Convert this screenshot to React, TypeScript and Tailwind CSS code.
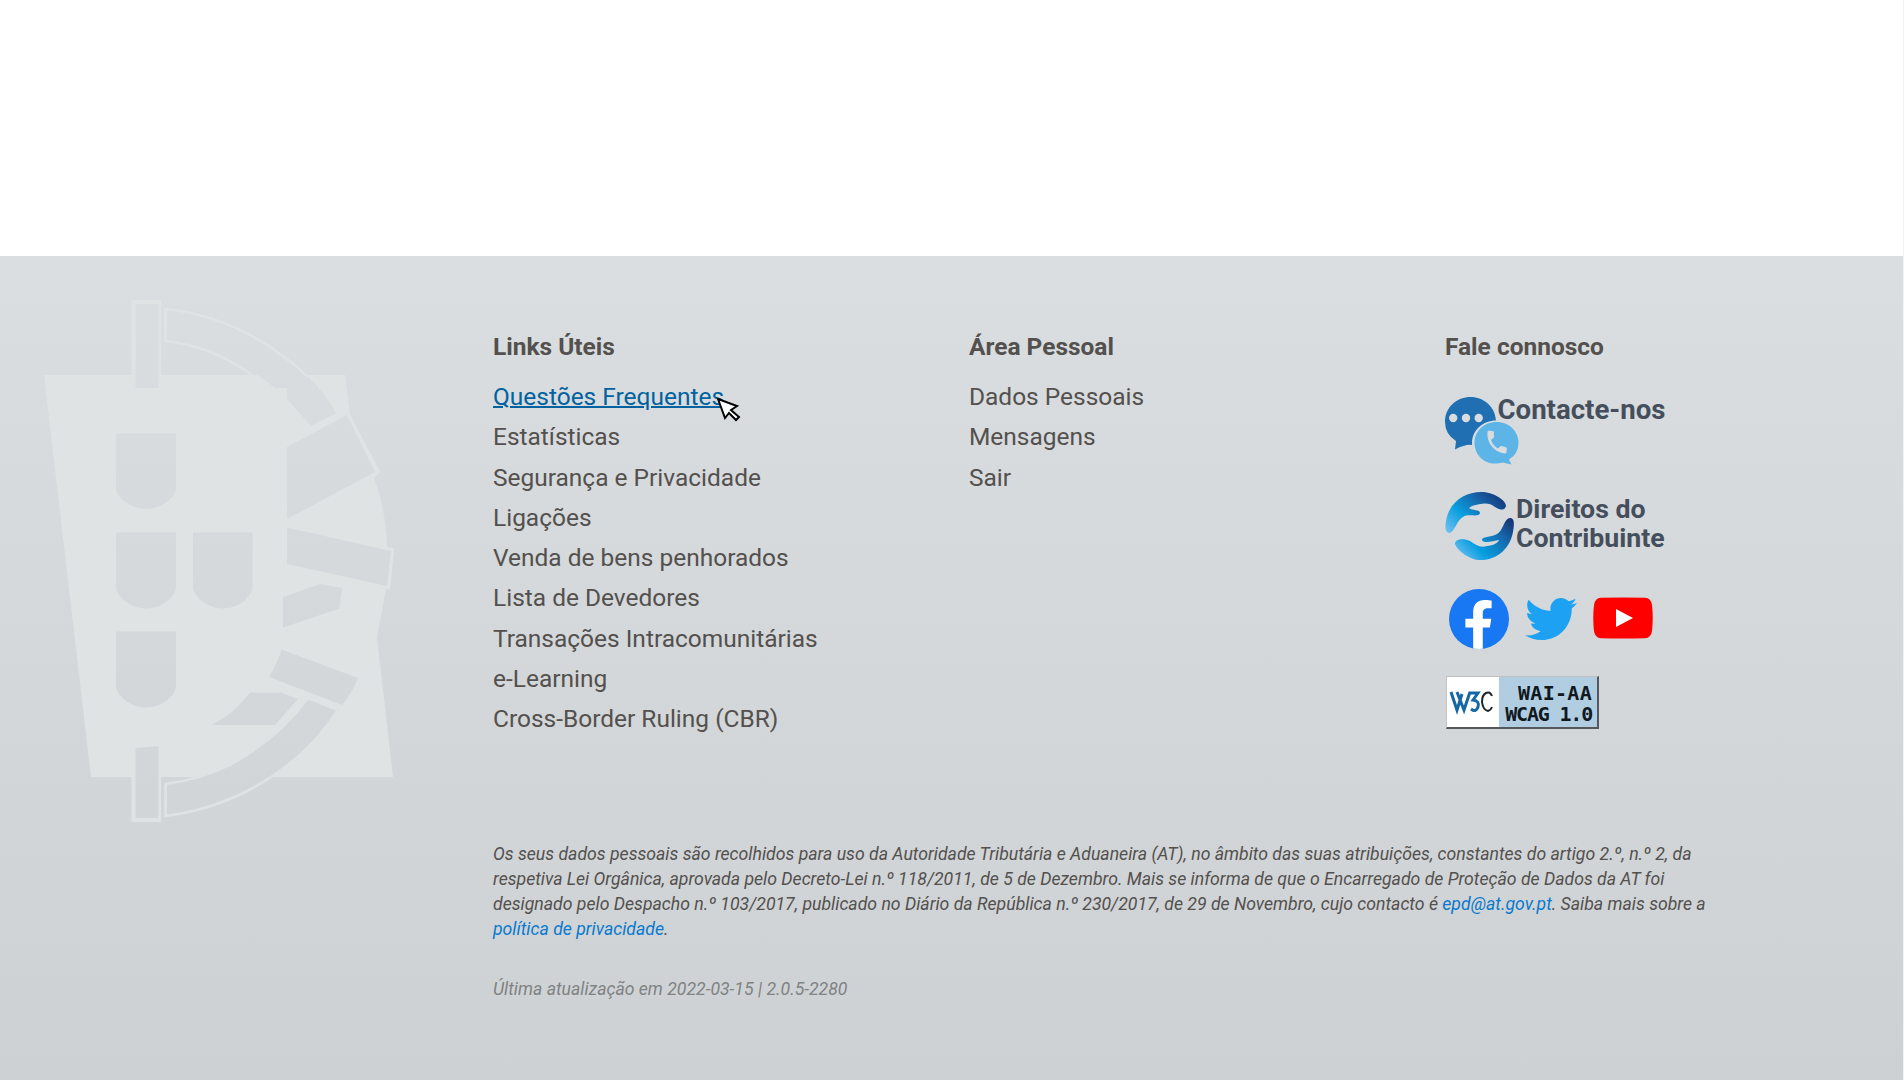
import { FaFacebookF, FaTwitter } from "react-icons/fa";
import { MdPhone } from "react-icons/md";

const usefulLinks = [
  "Questões Frequentes",
  "Estatísticas",
  "Segurança e Privacidade",
  "Ligações",
  "Venda de bens penhorados",
  "Lista de Devedores",
  "Transações Intracomunitárias",
  "e-Learning",
  "Cross-Border Ruling (CBR)",
];
const personalLinks = ["Dados Pessoais", "Mensagens", "Sair"];

function Emblem() {
  return (
    <svg viewBox="30 280 380 560" className="block h-[560px] w-[380px]">
      <defs>
        <linearGradient id="cut" gradientUnits="userSpaceOnUse" x1="0" y1="256" x2="0" y2="1080">
          <stop offset="0" stopColor="#dadee0" />
          <stop offset="1" stopColor="#cdd1d3" />
        </linearGradient>
      </defs>
      <g fill="#dfe3e4">
        <path d="M44 375H131.500V300H161V375H345L350 414L379 473L374 478Q386 510 387 547L394 549L389 590L386 589L377 637L393 777H91Z" />
        <path d="M131.500 777V822H161V777Z" />
      </g>
      <g fill="url(#cut)">
        <path d="M135.500 304H158.500V388H135.500Z" />
        <path d="M135.500 748L158.500 746V818H135.500Z" />
        <path d="M116 433.500H176V488C176 497 162 509 146 509S116 497 116 488Z" />
        <path d="M116 532.500H176V587C176 596 162 608.500 146 608.500S116 596 116 587Z" />
        <path d="M193 532.500H252.500V587C252.500 596 239 608.500 223 608.500S193 596 193 587Z" />
        <path d="M116 631.500H176V686C176 695 162 707.500 146 707.500S116 695 116 686Z" />
        <path d="M287 447L347 415L375 472L287 519Z" />
        <path d="M287 527.500L391 551L387 586L287 564Z" />
        <path d="M283 597L320 584L342 588L339.500 608.500L283 627.500Z" />
        <path d="M281.500 649.500L358 678Q352 693 342 705L269 677Q277 664 281.500 649.500Z" />
        <path d="M250 692.500H281L298 699L275 725H211Q233 715 250 692.500Z" />
        <path d="M161 777.500H190L161 784Z" />
      </g>
      <path d="M165.500 309Q244 317 308 377Q324 391 336 413.500L311 426L287 399V388H275Q224 346 165.500 341Z" fill="url(#cut)" />
      <path d="M252 375Q212 346 165.500 341V309Q244 317 308 377" fill="none" stroke="#dfe3e4" strokeWidth="2.500" />
      <path d="M308 698L338 710Q320 737 302 753Q243 806 165.500 816V784Q202 779 230 765Q280 737 308 698Z" fill="url(#cut)" stroke="#dfe3e4" strokeWidth="2.500" />
      <path d="M348 413L379 472L374 475M387 548L393 549L389 588L385 587" fill="none" stroke="#dfe3e4" strokeWidth="2.500" />
    </svg>
  );
}

function ContactIcon() {
  return (
    <svg viewBox="0 0 75 70" className="block h-[70px] w-[75px]">
      <path d="M25.500 0C39 0 50.500 10 51 24Q49 42 26.500 48Q21 47 10 52.500L11 44Q0 37 0 25C0 10 12 0 25.500 0Z" fill="#1f6fb2" />
      <circle cx="8.200" cy="21" r="4.200" fill="#d8dcde" />
      <circle cx="21" cy="21" r="4.200" fill="#d8dcde" />
      <circle cx="33.700" cy="21" r="4.200" fill="#d8dcde" />
      <path d="M51 23.500C38 23.500 27 33 27 46C27 60 38 69 51 69Q57 69 60 66L69 71L66 62Q75 56 75 46C75 33 65 23.500 51 23.500Z" fill="#d8dcde" />
      <path d="M51.500 25C64 25 73.500 34 73.500 45.500Q73.500 57 64 62.500L66.500 67.500Q61 66.500 58 65.500C42 70 30 60 29.500 46.500C29.500 34 39 25 51.500 25Z" fill="#5cb4e7" />
      <g transform="rotate(6 51 45)"><MdPhone x="38" y="31" size={28} color="#d8dcde" /></g>
    </svg>
  );
}

function HandsIcon() {
  return (
    <svg viewBox="0 0 70 70" className="block size-[70px] shrink-0">
      <defs>
        <linearGradient id="handTop" x1="0" y1=".9" x2="1" y2=".2">
          <stop stopColor="#69bef0" />
          <stop offset=".35" stopColor="#099fdf" />
          <stop offset=".7" stopColor="#1863aa" />
          <stop offset="1" stopColor="#143878" />
        </linearGradient>
        <linearGradient id="handBottom" x1="0" y1=".8" x2="1" y2=".1">
          <stop stopColor="#69bef0" />
          <stop offset=".3" stopColor="#079ee0" />
          <stop offset=".65" stopColor="#1471b5" />
          <stop offset="1" stopColor="#183474" />
        </linearGradient>
      </defs>
      <path d="M5 41C0 41 0 35 1 29C4 10 20 0 36 0C48 0 61 8 61 14C60 19 54 18 50 15C44 10 37 11 27 14L24 16C27 19 35 17 35 21C34 26 23 21 18 25C12 28 10 39 5 41Z" fill="url(#handTop)" />
      <path d="M66 26C70 27 69 34 68 40C64 61 47 69 33 68C23 67 11 57 10 52C10 47 18 46 25 49C31 53 35 56 42 54C48 54 54 50 54 48C49 49 38 52 37 48C37 44 45 46 52 42C59 38 59 25 66 26Z" fill="url(#handBottom)" />
    </svg>
  );
}

function W3Badge() {
  return (
    <div className="flex h-[53px] w-[153px] border-t border-r-2 border-b-2 border-l border-t-[#bfc0c0] border-r-[#555860] border-b-[#55585a] border-l-[#c4c4c4] bg-[#b1cde2]">
      <svg viewBox="0 2 52 50" className="h-[50px] w-[52px] shrink-0 bg-white">
        <g fill="none" strokeWidth="3">
          <g stroke="#1567a5">
            <path d="M4 17L10 35L15 19M10 17L17 35L23 17" />
            <path d="M22 18H31L26 25Q33 26 31 32Q29 38 24 34" />
          </g>
          <path d="M45 21Q43 16 39 18Q35 20 35 27Q36 35 41 36Q44 35 45 32" stroke="#20262a" strokeWidth="2" />
        </g>
      </svg>
      <div className="grow pt-[6px] pr-[5px] text-right font-['DejaVu_Sans_Mono',monospace] text-[20px] leading-[21px] font-bold text-[#101820]">
        <div className="tracking-[0.3px]">WAI-AA</div>
        <div className="tracking-[-1.2px]">WCAG 1.0</div>
      </div>
    </div>
  );
}

function LinkColumn({ title, links }: { title: string; links: string[] }) {
  return (
    <section className="w-[476px] shrink-0">
      <h2 className="mb-5 text-[24.48px] leading-[30px] font-bold">{title}</h2>
      <ul>
        {links.map((link) => (
          <li key={link} className="h-[40.25px] text-[24.48px] leading-[30px]">
            {link === "Questões Frequentes" ? (
              <a href="#" className="relative text-[#00629f] underline decoration-2">
                {link}
                <svg viewBox="0 0 26 26" className="absolute right-[-18px] bottom-[-12px] size-[26px]">
                  <path d="M2 2L21 9L15 13L23 20L20 23L13 16L9 21Z" fill="#fff" stroke="#000" strokeWidth="2" />
                </svg>
              </a>
            ) : (
              <a href="#">{link}</a>
            )}
          </li>
        ))}
      </ul>
    </section>
  );
}

export default function App() {
  return (
    <div className="flex h-[1080px] w-[1904px] flex-col overflow-hidden border-r border-[#f1f2f2] bg-white font-['Roboto',sans-serif] text-[#53504e]">
      <main className="h-[256px] shrink-0" />
      <footer className="flex grow bg-linear-to-b from-[#dadee0] to-[#cdd1d3]">
        <aside className="w-[493px] shrink-0 pt-6 pl-[30px]">
          <Emblem />
        </aside>
        <div className="grow">
          <div className="flex h-[586px] pt-[76px]">
            <LinkColumn title="Links Úteis" links={usefulLinks} />
            <LinkColumn title="Área Pessoal" links={personalLinks} />
            <section>
              <h2 className="text-[24.48px] leading-[30px] font-bold">Fale connosco</h2>
              <a href="#" className="mt-[35px] flex text-[27.6px] leading-[26px] font-bold text-[#454e5c]">
                <ContactIcon />
                <span className="-ml-[22.5px] whitespace-nowrap">Contacte-nos</span>
              </a>
              <a href="#" className="mt-[25px] flex text-[26.7px] leading-[29px] font-bold text-[#454e5c]">
                <HandsIcon />
                <span className="mt-[3px] ml-px whitespace-nowrap">Direitos do<br />Contribuinte</span>
              </a>
              <div className="mt-[27px] ml-[3.5px] flex items-center">
                <a href="#" className="flex size-[60px] items-end justify-center overflow-hidden rounded-full bg-[#1877f2]">
                  <FaFacebookF size={49} color="#fff" className="shrink-0" />
                </a>
                <FaTwitter size={52} color="#1da1f2" className="ml-4" />
                <svg viewBox="0 0 60 42" className="mb-0.5 ml-4 h-[42px] w-[60px]">
                  <path d="M8 .8Q30 0 52 .8Q58 1 59 8Q60.500 21 59 34Q58 41 52 41.200Q30 42 8 41.200Q2 41 1 34Q-.5 21 1 8Q2 1 8 .8Z" fill="red" />
                  <path d="M23 12L40 21L23 30Z" fill="#fff" />
                </svg>
              </div>
              <div className="mt-[27px] ml-px"><W3Badge /></div>
            </section>
          </div>
          <p className="text-[17.65px] leading-[25px] italic">
            Os seus dados pessoais são recolhidos para uso da Autoridade Tributária e Aduaneira (AT), no âmbito das suas atribuições, constantes do artigo 2.º, n.º 2, da<br />
            respetiva Lei Orgânica, aprovada pelo Decreto-Lei n.º 118/2011, de 5 de Dezembro. Mais se informa de que o Encarregado de Proteção de Dados da AT foi<br />
            designado pelo Despacho n.º 103/2017, publicado no Diário da República n.º 230/2017, de 29 de Novembro, cujo contacto é <a href="#" className="text-[#0879cf]">epd@at.gov.pt</a>. Saiba mais sobre a<br />
            <a href="#" className="text-[#0879cf]">política de privacidade</a>.
          </p>
          <p className="mt-[35px] text-[17.65px] leading-[25px] text-[#808283] italic">Última atualização em 2022-03-15 | 2.0.5-2280</p>
        </div>
      </footer>
    </div>
  );
}
